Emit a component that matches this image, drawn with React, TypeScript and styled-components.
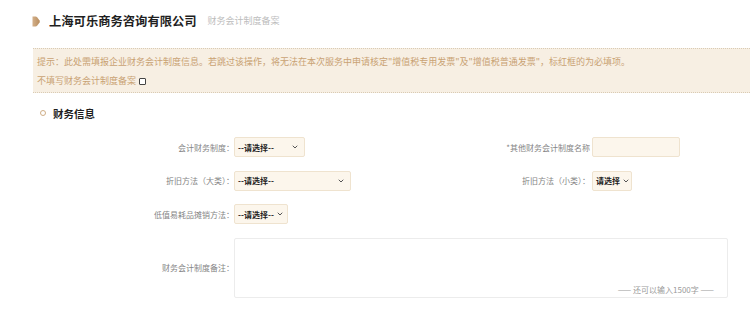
import styled, { createGlobalStyle } from 'styled-components'
import { ChevronDown } from 'lucide-react'

const GlobalStyle = createGlobalStyle`
  html, body {
    margin: 0;
    padding: 0;
    background: #ffffff;
    font-family: "Noto Sans CJK SC", "Noto Sans", sans-serif;
  }
`

const Page = styled.div`
  width: 750px;
  height: 309px;
  overflow: hidden;
  padding-top: 12px;
  box-sizing: border-box;
`

const Header = styled.div`
  display: flex;
  align-items: center;
  gap: 9px;
  padding-left: 32px;
  height: 18px;
`

const Marker = styled.svg`
  width: 8px;
  height: 11px;
  flex: none;
`

const Title = styled.h1`
  margin: 0;
  font-size: 12.3px;
  font-weight: 700;
  color: #1f1f1f;
  line-height: 18px;
`

const SubTitle = styled.span`
  font-size: 9px;
  color: #bdbdbd;
  margin-left: 2px;
  line-height: 18px;
`

const Notice = styled.div`
  margin: 18px 0 0 33px;
  padding: 3px 4px 2px 4px;
  background: #f7efe3;
  border-top: 1px dotted #d9cbb4;
  border-bottom: 1px dotted #d9cbb4;
  color: #c9a273;
  font-size: 9px;
  line-height: 19px;
  white-space: nowrap;
`

const CheckLine = styled.div`
  display: flex;
  align-items: center;
  gap: 3px;
`

const Check = styled.span`
  width: 5px;
  height: 5px;
  border: 1px solid #444;
  border-radius: 1px;
  background: #fff;
  margin-top: 2px;
`

const Section = styled.div`
  display: flex;
  align-items: center;
  gap: 7px;
  padding-left: 40px;
  margin-top: 13px;
  height: 14px;
`

const Ring = styled.span`
  width: 4px;
  height: 4px;
  border: 1px solid #cfae86;
  border-radius: 50%;
  background: #fff;
`

const SectionTitle = styled.h2`
  margin: 0;
  font-size: 10.5px;
  font-weight: 700;
  color: #1f1f1f;
`

const Form = styled.div`
  display: flex;
  flex-direction: column;
  gap: 13.5px;
  margin-top: 17px;
`

const Row = styled.div`
  display: flex;
  align-items: center;
`

const Field = styled.div<{ $labelWidth: number; $width?: number }>`
  display: flex;
  align-items: center;
  width: ${p => (p.$width ? `${p.$width}px` : 'auto')};
  flex: ${p => (p.$width ? 'none' : '1')};

  & > label {
    width: ${p => p.$labelWidth}px;
  }
`

const Label = styled.label<{ $gap?: number }>`
  flex: none;
  text-align: right;
  font-size: 8px;
  color: #858585;
  padding-right: ${p => p.$gap ?? 0}px;
  box-sizing: border-box;
  white-space: nowrap;
`

const Select = styled.div<{ $width: number }>`
  display: flex;
  align-items: center;
  justify-content: space-between;
  gap: 2px;
  width: ${p => p.$width}px;
  height: 20px;
  box-sizing: border-box;
  padding: 0 5px 0 3px;
  background: #fcf6ec;
  border: 1px solid #efe3cf;
  border-radius: 2px;
  font-size: 8px;
  font-weight: 700;
  color: #222;
  white-space: nowrap;
  overflow: hidden;

  & > svg {
    flex: none;
  }
`

const TextInput = styled.div`
  width: 88px;
  height: 20px;
  box-sizing: border-box;
  background: #fcf6ec;
  border: 1px solid #efe3cf;
  border-radius: 2px;
`

const AreaWrap = styled.div`
  position: relative;
  width: 494px;
  height: 60px;
`

const Area = styled.textarea`
  display: block;
  width: 100%;
  height: 100%;
  box-sizing: border-box;
  border: 1px solid #ececec;
  border-radius: 2px;
  resize: none;
  background: #fff;
  outline: none;
  margin: 0;
`

const Counter = styled.span`
  position: absolute;
  right: 14px;
  bottom: 3px;
  font-size: 8px;
  color: #9a9a9a;
  white-space: nowrap;
`

const Arrow = () => <ChevronDown size={8} strokeWidth={3} color="#555" />

const App = () => {
  return (
    <>
      <GlobalStyle />
      <Page>
        <Header>
          <Marker viewBox="0 0 8 11">
            <defs>
              <linearGradient id="mk" x1="0" y1="0" x2="1" y2="0">
                <stop offset="0" stopColor="#d3b08a" />
                <stop offset="1" stopColor="#b98d5e" />
              </linearGradient>
            </defs>
            <path d="M0.5 0.5 H3.5 Q4.5 0.5 5.3 1.4 L7.6 4.6 Q8 5.5 7.6 6.4 L5.3 9.6 Q4.5 10.5 3.5 10.5 H0.5 Z" fill="url(#mk)" />
          </Marker>
          <Title>上海可乐商务咨询有限公司</Title>
          <SubTitle>财务会计制度备案</SubTitle>
        </Header>

        <Notice>
          <div>提示：此处需填报企业财务会计制度信息。若跳过该操作，将无法在本次服务中申请核定"增值税专用发票"及"增值税普通发票"，标红框的为必填项。</div>
          <CheckLine>
            不填写财务会计制度备案
            <Check />
          </CheckLine>
        </Notice>

        <Section>
          <Ring />
          <SectionTitle>财务信息</SectionTitle>
        </Section>

        <Form>
          <Row>
            <Field $labelWidth={234} $width={400}>
              <Label>会计财务制度：</Label>
              <Select $width={71}>
                --请选择--
                <Arrow />
              </Select>
            </Field>
            <Field $labelWidth={192}>
              <Label $gap={2}>*其他财务会计制度名称</Label>
              <TextInput />
            </Field>
          </Row>
          <Row>
            <Field $labelWidth={234} $width={400}>
              <Label>折旧方法（大类）：</Label>
              <Select $width={117}>
                --请选择--
                <Arrow />
              </Select>
            </Field>
            <Field $labelWidth={192}>
              <Label $gap={2}>折旧方法（小类）：</Label>
              <Select $width={40}>
                请选择
                <Arrow />
              </Select>
            </Field>
          </Row>
          <Row>
            <Field $labelWidth={234} $width={400}>
              <Label>低值易耗品摊销方法：</Label>
              <Select $width={54}>
                --请选择--
                <Arrow />
              </Select>
            </Field>
          </Row>
          <Row>
            <Field $labelWidth={234}>
              <Label>财务会计制度备注：</Label>
              <AreaWrap>
                <Area />
                <Counter>—— 还可以输入1500字 ——</Counter>
              </AreaWrap>
            </Field>
          </Row>
        </Form>
      </Page>
    </>
  )
}

export default App
